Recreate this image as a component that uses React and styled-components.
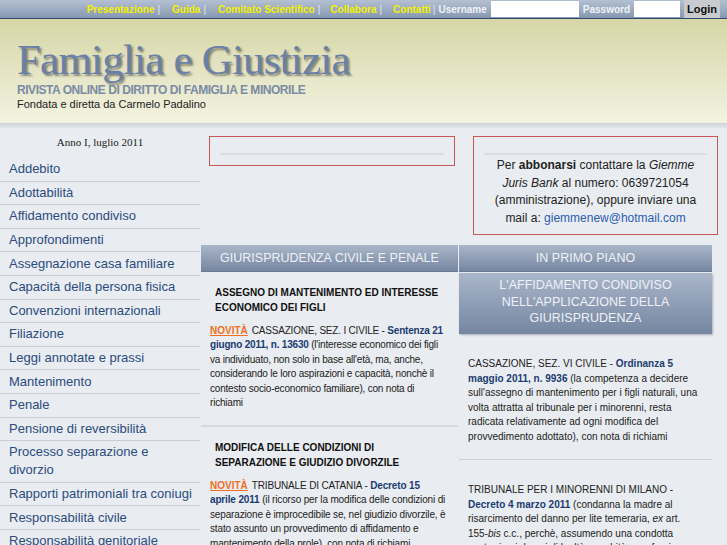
import React from "react";
import styled, { createGlobalStyle } from "styled-components";

const GlobalStyle = createGlobalStyle`
  body {
    margin: 0;
    background: #e9ecf0;
    font-family: "Liberation Sans", Arial, sans-serif;
  }
`;

const TopBar = styled.div`
  display: flex;
  justify-content: flex-end;
  align-items: center;
  height: 18px;
  padding-right: 7px;
  background: linear-gradient(#b4c0d2, #8898b2);
  border-bottom: 1px solid #2f4a6e;
  font-size: 10px;
  font-weight: bold;
`;

const TopLink = styled.a`
  color: #f4f200;
  text-decoration: none;
`;

const Pipe = styled.span`
  color: #e4e8ee;
  font-weight: normal;
  margin: 0 ${(p) => p.$after ?? 10}px 0 ${(p) => p.$before ?? 3}px;
`;

const Label = styled.span`
  color: #f0f2f6;
  margin-right: 4px;
`;

const Field = styled.input`
  width: ${(p) => p.$w}px;
  height: 16px;
  border: none;
  padding: 0;
  margin-right: 4px;
  background: #fff;
`;

const LoginButton = styled.button`
  height: 18px;
  border: none;
  padding: 0 3px;
  background: #c9cbce;
  color: #111;
  font-family: "Liberation Sans", Arial, sans-serif;
  font-size: 11px;
  font-weight: bold;
`;

const Header = styled.div`
  height: 104px;
  box-sizing: border-box;
  padding: 19px 0 0 17px;
  background: linear-gradient(#d6d6a7, #f3f3e2);
`;

const Title = styled.h1`
  margin: 0;
  font-family: "Liberation Serif", "Times New Roman", serif;
  font-weight: normal;
  font-size: 43px;
  line-height: 44px;
  letter-spacing: -0.8px;
  color: #6a80a6;
  text-shadow: 2px 2px 2px rgba(40, 40, 40, 0.5);
`;

const Subtitle = styled.div`
  margin-top: 1px;
  font-size: 12px;
  font-weight: bold;
  letter-spacing: -0.45px;
  line-height: 14px;
  color: #7a8ba3;
`;

const Founder = styled.div`
  font-size: 11px;
  line-height: 14px;
  color: #222;
`;

const Band = styled.div`
  height: 5px;
  background: linear-gradient(#cfd2d6, #e2e5e9);
`;

const Body = styled.div`
  display: flex;
  align-items: flex-start;
`;

const Sidebar = styled.nav`
  width: 200px;
  flex-shrink: 0;
`;

const Issue = styled.div`
  padding: 8px 0 10px;
  text-align: center;
  font-family: "Liberation Serif", "Times New Roman", serif;
  font-size: 11px;
  line-height: 12px;
  color: #222;
`;

const MenuItem = styled.a`
  display: block;
  padding: 2.3px 6px 2.3px 9px;
  border-bottom: 1px solid #cbcfd5;
  font-size: 13px;
  line-height: 18px;
  color: #2b4b7e;
  text-decoration: none;
`;

const Main = styled.div`
  flex: 1;
  margin-left: 1px;
`;

const BoxRow = styled.div`
  display: flex;
  align-items: flex-start;
  gap: 18px;
  padding: 8px 0 0 8px;
`;

const NoticeBox = styled.div`
  width: ${(p) => p.$w}px;
  box-sizing: border-box;
  border: 1px solid #c9585b;
  padding: 16px 10px ${(p) => p.$bottom}px;
`;

const Rule = styled.div`
  height: 2px;
  background: #d9dce1;
`;

const NoticeText = styled.p`
  margin: 2px 0 0;
  text-align: center;
  font-size: 12px;
  line-height: 17.7px;
  color: #222;
`;

const Mail = styled.a`
  color: #2b5db3;
  text-decoration: none;
`;

const Columns = styled.div`
  display: grid;
  grid-template-columns: 257px 253px;
  column-gap: 1px;
  margin-top: 10px;
`;

const SectionHead = styled.div`
  height: 27px;
  display: flex;
  align-items: center;
  justify-content: center;
  background: linear-gradient(#aab7ca, #7686a1);
  border-bottom: 1px solid #6a7a94;
  box-sizing: border-box;
  font-size: 12.5px;
  color: #eef1f6;
`;

const Highlight = styled.div`
  margin-top: 1px;
  padding: 4px 10px 7px;
  text-align: center;
  background: linear-gradient(#a9b6ca, #7586a1);
  box-shadow: 1px 1px 2px rgba(60, 70, 90, 0.35);
  font-size: 12.5px;
  line-height: 16.8px;
  color: #eef1f6;
`;

const Article = styled.div`
  padding: ${(p) => (p.$side ? "23px 10px 15px 9px" : "13px 10px 14px 9px")};
  border-bottom: ${(p) => (p.$side ? "1px solid #cdd1d7" : "2px solid #d6d9de")};
`;

const ArticleTitle = styled.h3`
  margin: 0 0 9px 5px;
  font-size: 10px;
  font-weight: bold;
  line-height: 15px;
  text-transform: uppercase;
  color: #111;
`;

const Text = styled.p`
  margin: 0;
  font-size: 10px;
  line-height: 14.5px;
  letter-spacing: ${(p) => p.$spacing ?? 0}px;
  color: #222;
`;

const Novita = styled.span`
  color: #f2701f;
  font-weight: bold;
  text-decoration: underline;
  letter-spacing: 0;
  margin-right: 4px;
`;

const Ref = styled.a`
  color: #1b3b72;
  font-weight: bold;
  text-decoration: none;
`;

const menu = [
  "Addebito",
  "Adottabilità",
  "Affidamento condiviso",
  "Approfondimenti",
  "Assegnazione casa familiare",
  "Capacità della persona fisica",
  "Convenzioni internazionali",
  "Filiazione",
  "Leggi annotate e prassi",
  "Mantenimento",
  "Penale",
  "Pensione di reversibilità",
  "Processo separazione e divorzio",
  "Rapporti patrimoniali tra coniugi",
  "Responsabilità civile",
  "Responsabilità genitoriale",
  "Separazione",
];

export default function App() {
  return (
    <>
      <GlobalStyle />
      <TopBar>
        <TopLink href="#">Presentazione</TopLink>
        <Pipe $after={12}>|</Pipe>
        <TopLink href="#">Guida</TopLink>
        <Pipe $after={12}>|</Pipe>
        <TopLink href="#">Comitato Scientifico</TopLink>
        <Pipe>|</Pipe>
        <TopLink href="#">Collabora</TopLink>
        <Pipe $after={11}>|</Pipe>
        <TopLink href="#">Contatti</TopLink>
        <Pipe $before={2} $after={3}>|</Pipe>
        <Label>Username</Label>
        <Field $w={88} />
        <Label>Password</Label>
        <Field $w={46} />
        <LoginButton>Login</LoginButton>
      </TopBar>

      <Header>
        <Title>Famiglia e Giustizia</Title>
        <Subtitle>RIVISTA ONLINE DI DIRITTO DI FAMIGLIA E MINORILE</Subtitle>
        <Founder>Fondata e diretta da Carmelo Padalino</Founder>
      </Header>
      <Band />

      <Body>
        <Sidebar>
          <Issue>Anno I, luglio 2011</Issue>
          {menu.map((item) => (
            <MenuItem href="#" key={item}>
              {item}
            </MenuItem>
          ))}
        </Sidebar>

        <Main>
          <BoxRow>
            <NoticeBox $w={246} $bottom={10}>
              <Rule />
            </NoticeBox>
            <NoticeBox $w={245} $bottom={6}>
              <Rule />
              <NoticeText>
                Per <b>abbonarsi</b> contattare la <i>Giemme Juris Bank</i> al
                numero: 0639721054 (amministrazione), oppure inviare una mail
                a: <Mail href="#">giemmenew@hotmail.com</Mail>
              </NoticeText>
            </NoticeBox>
          </BoxRow>

          <Columns>
            <div>
              <SectionHead>GIURISPRUDENZA CIVILE E PENALE</SectionHead>
              <Article>
                <ArticleTitle>
                  Assegno di mantenimento ed interesse economico dei figli
                </ArticleTitle>
                <Text $spacing={-0.2}>
                  <Novita>NOVITÀ</Novita>CASSAZIONE, SEZ. I CIVILE -{" "}
                  <Ref href="#">Sentenza 21 giugno 2011, n. 13630</Ref>{" "}
                  (l'interesse economico dei figli va individuato, non solo in
                  base all'età, ma, anche, considerando le loro aspirazioni e
                  capacità, nonchè il contesto socio-economico familiare), con
                  nota di richiami
                </Text>
              </Article>
              <Article>
                <ArticleTitle>
                  Modifica delle condizioni di separazione e giudizio divorzile
                </ArticleTitle>
                <Text $spacing={-0.15}>
                  <Novita>NOVITÀ</Novita>TRIBUNALE DI CATANIA -{" "}
                  <Ref href="#">Decreto 15 aprile 2011</Ref> (il ricorso per
                  la modifica delle condizioni di separazione è improcedibile
                  se, nel giudizio divorzile, è stato assunto un provvedimento
                  di affidamento e mantenimento della prole), con nota di
                  richiami
                </Text>
              </Article>
            </div>

            <div>
              <SectionHead>IN PRIMO PIANO</SectionHead>
              <Highlight>
                L'AFFIDAMENTO CONDIVISO NELL'APPLICAZIONE DELLA GIURISPRUDENZA
              </Highlight>
              <Article $side>
                <Text>
                  CASSAZIONE, SEZ. VI CIVILE -{" "}
                  <Ref href="#">Ordinanza 5 maggio 2011, n. 9936</Ref> (la
                  competenza a decidere sull'assegno di mantenimento per i
                  figli naturali, una volta attratta al tribunale per i
                  minorenni, resta radicata relativamente ad ogni modifica del
                  provvedimento adottato), con nota di richiami
                </Text>
              </Article>
              <Article $side>
                <Text>
                  TRIBUNALE PER I MINORENNI DI MILANO -{" "}
                  <Ref href="#">Decreto 4 marzo 2011</Ref> (condanna la madre
                  al risarcimento del danno per lite temeraria, <i>ex</i> art.
                  155-<i>bis</i> c.c., perchè, assumendo una condotta
                  contraria ai doveri di lealtà e probità, non forniva
                  alcuna prova delle proprie allegazioni), con nota di richiami
                </Text>
              </Article>
            </div>
          </Columns>
        </Main>
      </Body>
    </>
  );
}
